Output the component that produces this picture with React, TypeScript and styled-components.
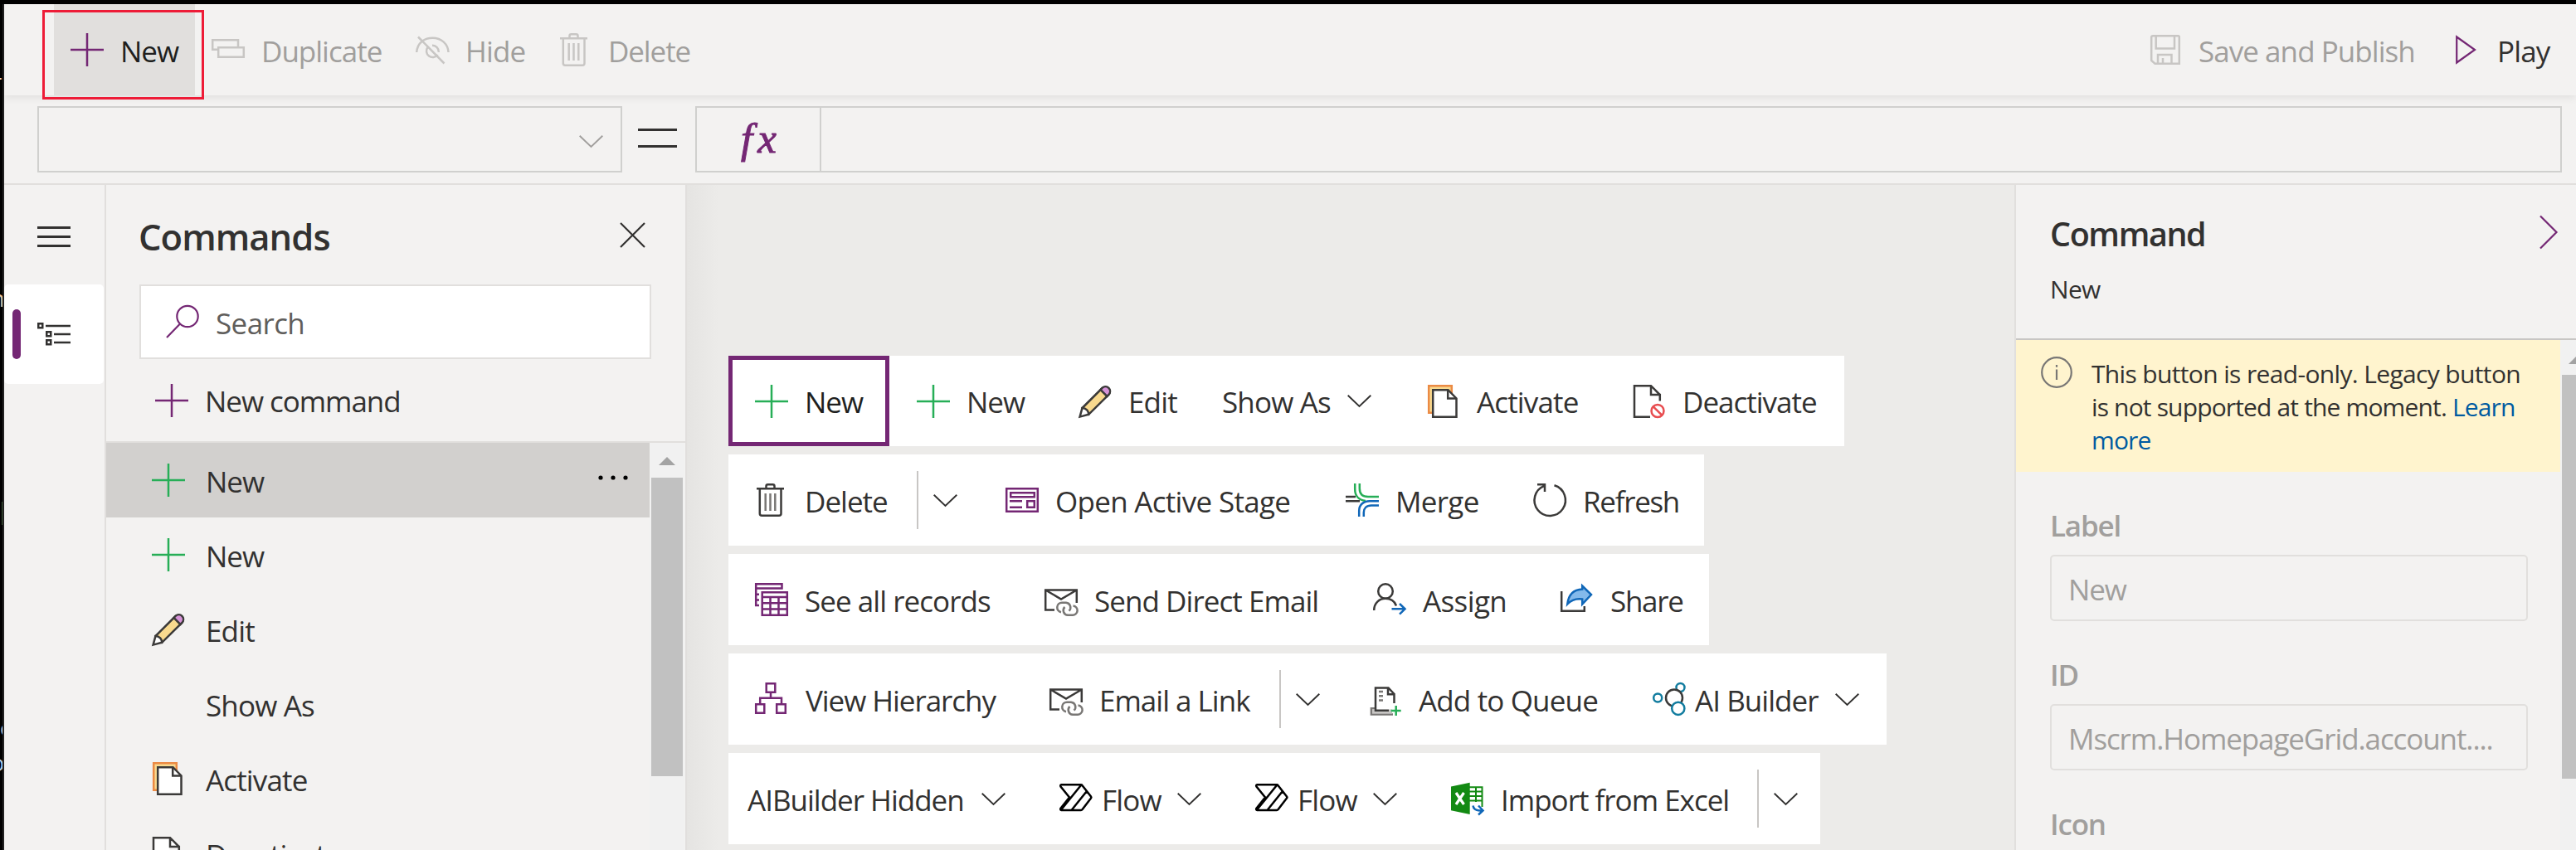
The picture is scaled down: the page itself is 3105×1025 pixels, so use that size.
import React from "react";
import styled, { createGlobalStyle, css } from "styled-components";

const purple = "#742774";
const green = "#27ae57";
const ink = "#323130";
const line = "#3b3a39";
const muted = "#a19f9d";
const mutedIcon = "#c8c6c4";
const blue = "#1067b8";
const surface = "#f3f2f1";
const border = "#e1dfdd";

const GlobalStyle = createGlobalStyle`
  * { box-sizing: border-box; }
  html, body { margin: 0; padding: 0; overflow: hidden; background: #000; }
  body { font-family: "Open Sans", "Noto Sans", sans-serif; font-size: 35px; color: ${ink}; }
`;

/* ---------- shell ---------- */

const Screen = styled.div`
  display: flex;
  width: 3105px;
  height: 1025px;
  padding-top: 5px;
  background: #000;
  overflow: hidden;
`;

const Backdrop = styled.div`
  position: relative;
  flex: none;
  width: 5px;
  overflow: hidden;
  border-right: 2px solid #222;
`;

const Sliver = styled.span<{ $top: number; $left: number; $color: string }>`
  position: absolute;
  top: ${(p) => p.$top}px;
  left: ${(p) => p.$left}px;
  font-size: 27px;
  line-height: 30px;
  color: ${(p) => p.$color};
`;

const AppWindow = styled.div`
  position: relative;
  display: flex;
  flex-direction: column;
  flex: 1;
  min-width: 0;
  background: ${surface};
`;

/* ---------- shared parts ---------- */

const Svg = styled.svg`
  display: block;
  flex: none;
  overflow: visible;
  fill: none;
`;

const Label = styled.span<{ $w?: number; $ls?: number; $gap?: number; $color?: string }>`
  flex: none;
  display: block;
  width: ${(p) => (p.$w ? `${p.$w}px` : "auto")};
  margin-left: ${(p) => p.$gap ?? 19}px;
  padding: 3px 0 0 1px;
  line-height: 48px;
  letter-spacing: ${(p) => p.$ls ?? -0.85}px;
  white-space: nowrap;
  color: ${(p) => p.$color ?? ink};
`;

const Item = styled.div<{ $lead?: number }>`
  flex: none;
  display: flex;
  align-items: center;
  margin-left: ${(p) => p.$lead ?? 65}px;
`;

const ScrollTrack = styled.div`
  flex: none;
  width: 42px;
  padding: 0 2px;
  background: #f1f1f1;
`;

const ScrollArrow = styled.div<{ $top: number; $left: number }>`
  width: 0;
  height: 10px;
  margin: ${(p) => p.$top}px 0 0 ${(p) => p.$left}px;
  border: solid transparent;
  border-width: 0 10px 10px;
  border-bottom-color: #a3a3a3;
`;

const ScrollThumb = styled.div<{ $h: number; $gap: number }>`
  height: ${(p) => p.$h}px;
  margin-top: ${(p) => p.$gap}px;
  background: #c1c1c1;
`;

/* ---------- icons, drawn on a 40px grid ---------- */

const Icon = ({ children, w = 40, color = line }: { children: React.ReactNode; w?: number; color?: string }) => (
  <Svg width={w} height={40} viewBox={`0 0 ${w} 40`} stroke={color} strokeWidth={2.5}>
    {children}
  </Svg>
);

const Plus = ({ color = green }: { color?: string }) => (
  <Icon color={color}>
    <path d="M20 0V40M0 20H40" />
  </Icon>
);

const Chevron = ({ color = ink }: { color?: string }) => (
  <Svg width={29} height={15} viewBox="0 0 29 15" stroke={color} strokeWidth={1.9}>
    <path d="M.7.7 14.5 14 28.3.7" />
  </Svg>
);

const Duplicate = () => (
  <Icon color={mutedIcon}>
    <path d="M32 16V8.2H1.2V19.8H7M8.2 17.2H38.8V28.8H8.2Z" />
  </Icon>
);

const Hide = () => (
  <Icon color={mutedIcon}>
    <path d="M1.2 23C2 12 10 5.8 20.5 5.8S39 13 39.5 23M3 4.5 34.5 36.5" />
    <path d="M14.5 17a7.5 7.5 0 1 0 12 9M20 14.8a7.5 7.5 0 0 1 7.8 8" />
  </Icon>
);

const Trash = ({ color = line, bars = "#797775" }: { color?: string; bars?: string }) => (
  <Icon color={color}>
    <path d="M2 6.3H35M13.5 6V3.2q0-2 2-2h6q2 0 2 2V6M5.8 6.5V36.2q0 2.5 2.5 2.5H29q2.5 0 2.5-2.5V6.5" />
    <path d="M12.7 12V33M18.5 12V33M24.3 12V33" stroke={bars} />
  </Icon>
);

const Save = () => (
  <Icon color={mutedIcon}>
    <path d="M5 3.2H35.5q1.3 0 1.3 1.3V36.8H7.5L3.2 33V5q0-1.800 1.800-1.800ZM8.700 3V18.500H31V3M11 36.500V26H27.500V36.500M17 30V36" />
  </Icon>
);

const Play = () => (
  <Icon w={27} color={purple}>
    <path d="M2.2 4.5V35.5L24 20Z" strokeWidth={2.2} />
  </Icon>
);

const Pencil = () => (
  <Icon>
    <path d="M4.5 28 28.5 4A5.6 5.6 0 0 1 36.4 11.9L12.2 35.8Z" fill="#f8d98e" />
    <path d="M26.5 6 28.8 3.6A5.6 5.6 0 0 1 36.7 11.5L34.4 13.9Z" fill="#d693d8" />
    <path d="M4.5 28C9 28 12.5 31.5 12.2 35.8L1.6 38.6Z" fill="#fff" />
  </Icon>
);

const Activate = () => (
  <Icon>
    <path d="M2.2 1.2H29.8V33.8H2.2Z" fill="#f8d98e" stroke="#eb8a44" />
    <path d="M7.2 6.2H25.5L35.5 16.5V38.8H7.2Z" fill="#fff" />
    <path d="M25.2 6V16.5H35.5" />
  </Icon>
);

const Deactivate = () => (
  <Icon>
    <path d="M21 38.8H2V1.2H22L32.8 12V19.5V12H22V1.2" fill="#fff" />
    <circle cx={30} cy={31.5} r={7.5} stroke="#e84d50" fill="#fff" />
    <path d="M24.8 26.3 35.2 36.7" stroke="#e84d50" />
  </Icon>
);

const Stage = () => (
  <Icon color={purple}>
    <path d="M1.2 6.2H38.8V33.8H1.2ZM6.2 11.2H34.8V16.3H6.2ZM5 21.2H20M5 28.7H20M26.2 21.2H34.8V28.8H26.2Z" />
  </Icon>
);

const Merge = () => (
  <Icon>
    <path d="M0 16H12M0 21.2H17" />
    <path d="M11.2 0V7C11.2 14 15 20 24 21M16.8 0V6C16.8 12 20 16 27 16H40" stroke={green} />
    <path d="M40 21.2H29C21 21.2 16.2 26 16.2 33V40M40 26.5H31C25 26.5 21.8 30 21.8 35V40" stroke={blue} />
  </Icon>
);

const Refresh = () => (
  <Icon>
    <path d="M25.5 2.3A18.7 18.7 0 1 1 13.5 2.8M5 1.3H14V10" />
  </Icon>
);

const Records = () => (
  <Icon color={purple}>
    <path d="M5 13.7H1.2V1.2H32.5V6.5H1.2M5 20.5H1.2M1.2 13V27H5" />
    <path d="M8.7 11.2H38.8V38.8H8.7ZM8.7 17H38.8M8.7 24.2H38.8M8.7 31.5H38.8M18.5 17V38.8M28.5 17V38.8" />
  </Icon>
);

const MailLink = () => (
  <Icon>
    <path d="M12 32.5H1.2V8.5H38.8V24M1.2 8.5 20 19.5 38.8 8.5" />
    <path d="M20 35.2a5.8 5.8 0 0 1 1-11.5h5a5.8 5.8 0 0 1 3.5 10M34.5 27.5A5.6 5.6 0 0 1 33.5 38.7H28a5.6 5.6 0 0 1-3.5-9.7" stroke="#797775" />
  </Icon>
);

const Assign = () => (
  <Icon>
    <circle cx={15} cy={10} r={8.8} />
    <path d="M1.2 33C1.2 24 7.5 18.8 15 18.8 21 18.8 26 22 28 27.5" />
    <path d="M22.5 31.3H38.5M32 25 38.5 31.3 32 37.6" stroke={blue} />
  </Icon>
);

const Share = () => (
  <Icon>
    <path d="M2.2 10V33.8H29.8V28" />
    <path d="M27.2 3.5 38 14 27.2 25.5V19.5C20 18.5 14 20.5 9.3 25.5 10.5 14 17 8 27.2 7.5Z" fill="#83b9eb" stroke={blue} />
  </Icon>
);

const Hierarchy = () => (
  <Icon color={purple}>
    <path d="M13.7 1.2H24.3V11.8H13.7ZM19 12V18.8M6.2 25V18.8H32V25M1.2 26.2H11.3V36.8H1.2ZM26.2 26.2H36.8V36.8H26.2Z" />
  </Icon>
);

const Queue = () => (
  <Icon>
    <path d="M6 31.2H1.9V38.5H28" stroke="#797775" />
    <path d="M3 32.5H27V37.5H3Z" fill="#c8c6c4" stroke="none" />
    <path d="M23 33.8H7V6.5H22.5L29.5 14V25V14.2H22V6.5" fill="#fff" />
    <path d="M11 11H16M11 16.3H16M11 21.5H16" stroke="#797775" />
    <path d="M31.7 28V40M25.7 34H37.7" stroke={green} />
  </Icon>
);

const AiBuilder = () => (
  <Icon color="#117c9f">
    <circle cx={33.5} cy={6} r={5} />
    <circle cx={26} cy={18.5} r={10} stroke={line} fill="#fff" />
    <circle cx={6.2} cy={18.5} r={5} />
    <circle cx={30.8} cy={31.3} r={7.6} fill="#fff" />
  </Icon>
);

const Flow = () => (
  <Icon color="#000">
    <path d="M2.5 3.3H26Q27 3.3 27.6 4.2L38 17.5Q38.8 18.5 38 19.5L27.5 33.2Q27 34 26 34H2.5Q.5 33.5 1.5 31.7L12 18.5 1.5 5.5Q.5 3.8 2.5 3.3ZM26.5 3.3 2 33.5M33 11 14.5 34" />
  </Icon>
);

const Excel = () => (
  <Icon>
    <path d="M22 6.2H37.5V30M22 11.5H37M22 17H37M22 22.5H37M30 6V24" stroke="#138a13" strokeWidth={2} />
    <path d="M0 5.5 22.7.8V39L0 34.3Z" fill="#138a13" stroke="none" />
    <path d="M6 13 15.5 27M15.5 13 6 27" stroke="#fff" strokeWidth={3.2} />
    <path d="M26.5 28.5C27 32.5 29 34.5 38 34.5M33 28.5 38.5 34.5 33 39.5" stroke={blue} />
  </Icon>
);

/* ---------- top command bar ---------- */

const TopBar = styled.header`
  position: relative;
  flex: none;
  display: flex;
  align-items: stretch;
  height: 110px;
  padding-right: 32px;
  box-shadow: 0 2px 10px rgba(0, 0, 0, 0.09);
`;

const NewButton = styled.div`
  display: flex;
  align-items: center;
  width: 170px;
  margin-left: 60px;
  padding-left: 20px;
  background: ${border};
`;

const Highlight = styled.div`
  position: absolute;
  left: 46px;
  top: 7px;
  width: 195px;
  height: 108px;
  border: 3px solid #ee1c37;
`;

const Spacer = styled.div`
  flex: 1;
`;

const FormulaBar = styled.div`
  flex: none;
  display: flex;
  align-items: flex-start;
  height: 108px;
  padding: 13px 17px 0 40px;
  border-bottom: 2px solid ${border};
`;

const PropertySelect = styled.div`
  display: flex;
  align-items: center;
  justify-content: flex-end;
  width: 705px;
  height: 80px;
  padding: 4px 21px 0 0;
  border: 2px solid #d0d0ce;
`;

const Equals = styled.div`
  width: 47px;
  height: 23px;
  margin: 27px 22px 0 19px;
  border: solid ${ink};
  border-width: 3px 0;
`;

const Formula = styled.div`
  flex: 1;
  display: flex;
  height: 80px;
  border: 2px solid #d0d0ce;
`;

const FxCell = styled.div`
  width: 150px;
  padding-left: 53px;
  border-right: 2px solid #d0d0ce;
  font: italic 51px/74px "Liberation Serif", serif;
  letter-spacing: 6px;
  color: ${purple};
  -webkit-text-stroke: 1px ${purple};
`;

/* ---------- body ---------- */

const Body = styled.div`
  flex: 1;
  display: flex;
  min-height: 0;
`;

const Rail = styled.nav`
  flex: none;
  width: 123px;
  border-right: 2px solid ${border};
`;

const RailButton = styled.div<{ $active?: boolean }>`
  display: flex;
  align-items: center;
  height: 120px;
  width: 120px;
  padding: 5px 0 0 40px;
  ${(p) =>
    p.$active &&
    css`
      padding: 0 0 0 10px;
      gap: 20px;
      background: #fff;
      border-radius: 5px;
    `}
`;

const ActiveMark = styled.div`
  width: 10px;
  height: 60px;
  border-radius: 5px;
  background: ${purple};
`;

const Panel = styled.aside`
  flex: none;
  display: flex;
  flex-direction: column;
  width: 700px;
  border-right: 2px solid ${border};
`;

const PanelHeader = styled.div`
  display: flex;
  align-items: center;
  justify-content: space-between;
  height: 120px;
  padding: 0 48px 0 39px;
`;

const PanelTitle = styled.h2`
  margin: 5px 0 0;
  font-size: 43.5px;
  line-height: 56px;
  font-weight: 600;
  letter-spacing: -0.95px;
`;

const SearchBox = styled.div`
  display: flex;
  align-items: center;
  width: 617px;
  height: 90px;
  margin-left: 40px;
  padding-left: 30px;
  background: #fff;
  border: 2px solid ${border};
`;

const NewCommand = styled.div`
  display: flex;
  align-items: center;
  height: 101px;
  padding-left: 59px;
  border-bottom: 2px solid ${border};
`;

const CommandScroller = styled.div`
  flex: 1;
  display: flex;
  min-height: 0;
  padding-right: 1px;
`;

const CommandList = styled.div`
  flex: 1;
  min-width: 0;
  overflow: hidden;
`;

const CommandRow = styled.div<{ $selected?: boolean }>`
  display: flex;
  align-items: center;
  height: 90px;
  padding: 0 26px 0 55px;
  background: ${(p) => (p.$selected ? "#d2d0ce" : "transparent")};
`;

const IconSlot = styled.div`
  width: 40px;
`;

/* ---------- canvas ---------- */

const Canvas = styled.main`
  flex: 1;
  min-width: 0;
  display: flex;
  flex-direction: column;
  align-items: flex-start;
  gap: 10px;
  padding: 206px 0 0 50px;
  overflow: hidden;
  background: linear-gradient(90deg, #e5e4e2 0, #ecebe9 38px);
`;

const Ribbon = styled.div<{ $w: number; $h?: number }>`
  flex: none;
  display: flex;
  align-items: center;
  width: ${(p) => p.$w}px;
  height: ${(p) => p.$h ?? 110}px;
  background: #fff;
`;

const SelectedCommand = styled.div`
  display: flex;
  align-items: center;
  align-self: stretch;
  width: 194px;
  padding-left: 27px;
  border: 5px solid ${purple};
`;

const Split = styled.div<{ $before?: number }>`
  display: flex;
  align-items: center;
  height: 70px;
  margin-left: ${(p) => p.$before ?? 35}px;
  padding-left: 18px;
  border-left: 2px solid ${mutedIcon};
`;

const Drop = styled.div`
  margin-left: 20px;
`;

/* ---------- properties ---------- */

const Properties = styled.aside`
  flex: none;
  display: flex;
  flex-direction: column;
  width: 677px;
  border-left: 2px solid ${border};
`;

const PropertiesHeader = styled.div`
  height: 187px;
  padding: 35px 22px 0 41px;
  border-bottom: 2px solid ${mutedIcon};
`;

const TitleLine = styled.div`
  display: flex;
  justify-content: space-between;
  height: 70px;
`;

const PropertiesTitle = styled.h3`
  margin: -3px 0 0;
  font-size: 39.5px;
  line-height: 54px;
  font-weight: 600;
  letter-spacing: -1.4px;
`;

const Subtitle = styled.div`
  font-size: 30px;
  line-height: 41px;
  letter-spacing: -0.7px;
`;

const PropertiesBody = styled.div`
  flex: 1;
  display: flex;
  min-height: 0;
  overflow: hidden;
`;

const Form = styled.div`
  flex: none;
  width: 656px;
  overflow: hidden;
`;

const Notice = styled.div`
  display: flex;
  height: 159px;
  padding: 20px 0 0 30px;
  gap: 23px;
  background: #fff4ce;
  font-size: 30px;
  line-height: 40px;
`;

const NoticeText = styled.p`
  margin: 1px 0 0;
  white-space: nowrap;
`;

const NoticeLine = styled.span<{ $ls: number }>`
  display: block;
  letter-spacing: ${(p) => p.$ls}px;
`;

const Link = styled.a`
  color: #005ba1;
`;

const Field = styled.div`
  padding: 40px 0 0 41px;
`;

const FieldName = styled.div`
  height: 46px;
  line-height: 50px;
  font-size: 35px;
  font-weight: 600;
  letter-spacing: -1.2px;
  color: ${muted};
`;

const FieldBox = styled.div`
  width: 576px;
  height: 80px;
  margin-top: 14px;
  padding: 2px 20px 0 20px;
  border: 2px solid ${border};
  border-radius: 5px;
  line-height: 76px;
  white-space: nowrap;
  letter-spacing: -1.1px;
  color: ${muted};
`;

const sidebarCommands: { icon?: React.ReactNode; name: string; selected?: boolean; ls?: number }[] = [
  { icon: <Plus />, name: "New", selected: true, ls: -1 },
  { icon: <Plus />, name: "New", ls: -1 },
  { icon: <Pencil />, name: "Edit" },
  { name: "Show As" },
  { icon: <Activate />, name: "Activate" },
  { icon: <Deactivate />, name: "Deactivate" },
];

export default function App() {
  return (
    <>
      <GlobalStyle />
      <Screen>
        <Backdrop>
          <Sliver $top={72} $left={-6} $color="#f3d9c8">-</Sliver>
          <Sliver $top={340} $left={-11} $color="#e8c9a8">n</Sliver>
          <Sliver $top={596} $left={-4} $color="#d98b3a">|</Sliver>
          <Sliver $top={858} $left={0} $color="#e0dcd8">o</Sliver>
          <Sliver $top={900} $left={-11} $color="#b9d4f0">o</Sliver>
        </Backdrop>
        <AppWindow>
          <TopBar>
            <NewButton>
              <Plus color={purple} />
              <Label $ls={-1} $color="#201f1e">New</Label>
            </NewButton>
            <Item $lead={20}>
              <Duplicate />
              <Label $w={147} $ls={-1} $color={muted}>Duplicate</Label>
            </Item>
            <Item $lead={40}>
              <Hide />
              <Label $w={73} $color={muted}>Hide</Label>
            </Item>
            <Item $lead={40}>
              <Trash color={mutedIcon} bars={mutedIcon} />
              <Label $w={100} $ls={-1.1} $color={muted}>Delete</Label>
            </Item>
            <Spacer />
            <Item $lead={0}>
              <Save />
              <Label $w={261} $ls={-0.95} $color={muted}>Save and Publish</Label>
            </Item>
            <Item $lead={49}>
              <Play />
              <Label $w={64} $gap={23}>Play</Label>
            </Item>
            <Highlight />
          </TopBar>

          <FormulaBar>
            <PropertySelect>
              <Chevron color={muted} />
            </PropertySelect>
            <Equals />
            <Formula>
              <FxCell>fx</FxCell>
            </Formula>
          </FormulaBar>

          <Body>
            <Rail>
              <RailButton>
                <Svg width={40} height={25} viewBox="0 0 40 25" stroke={ink} strokeWidth={3}>
                  <path d="M0 1.5H40M0 12.5H40M0 23.5H40" />
                </Svg>
              </RailButton>
              <RailButton $active>
                <ActiveMark />
                <Svg width={40} height={28} viewBox="0 0 40 28" stroke={ink} strokeWidth={2.5}>
                  <path d="M1.25 1.25H6.25V6.25H1.25ZM11.25 11.25H16.25V16.25H11.25ZM11.25 21.25H16.25V26.25H11.25ZM10 4H40M20 14H40M20 24H40" />
                </Svg>
              </RailButton>
            </Rail>

            <Panel>
              <PanelHeader>
                <PanelTitle>Commands</PanelTitle>
                <Svg width={31} height={31} viewBox="0 0 31 31" stroke={ink} strokeWidth={2.2}>
                  <path d="M1 1 30 30M30 1 1 30" />
                </Svg>
              </PanelHeader>
              <SearchBox>
                <Icon color={purple}>
                  <circle cx={26} cy={13.5} r={12.7} strokeWidth={2.2} />
                  <path d="M17 22.5 1 39" strokeWidth={2.2} />
                </Icon>
                <Label $ls={-0.6} $color="#605e5c">Search</Label>
              </SearchBox>
              <NewCommand>
                <Plus color={purple} />
                <Label $ls={-1.05}>New command</Label>
              </NewCommand>
              <CommandScroller>
                <CommandList>
                  {sidebarCommands.map((c, i) => (
                    <CommandRow key={i} $selected={c.selected}>
                      <IconSlot>{c.icon}</IconSlot>
                      <Label $gap={24} $ls={c.ls}>{c.name}</Label>
                      {c.selected && (
                        <>
                          <Spacer />
                          <Svg width={36} height={10} viewBox="0 0 36 10">
                            <g fill="#000">
                              <circle cx={3} cy={2} r={2.6} />
                              <circle cx={18} cy={2} r={2.6} />
                              <circle cx={33} cy={2} r={2.6} />
                            </g>
                          </Svg>
                        </>
                      )}
                    </CommandRow>
                  ))}
                </CommandList>
                <ScrollTrack>
                  <ScrollArrow $top={17} $left={9} />
                  <ScrollThumb $gap={15} $h={360} />
                </ScrollTrack>
              </CommandScroller>
            </Panel>

            <Canvas>
              <Ribbon $w={1345} $h={109}>
                <SelectedCommand>
                  <Plus />
                  <Label $ls={-1} $color="#201f1e">New</Label>
                </SelectedCommand>
                <Item $lead={33}>
                  <Plus />
                  <Label $w={71} $ls={-1}>New</Label>
                </Item>
                <Item>
                  <Pencil />
                  <Label $w={60}>Edit</Label>
                </Item>
                <Item $lead={53}>
                  <Label $w={132} $gap={0}>Show As</Label>
                  <Drop><Chevron /></Drop>
                </Item>
                <Item $lead={67}>
                  <Activate />
                  <Label $w={124}>Activate</Label>
                </Item>
                <Item>
                  <Deactivate />
                  <Label $w={163} $ls={-1}>Deactivate</Label>
                </Item>
              </Ribbon>

              <Ribbon $w={1176}>
                <Item $lead={32}>
                  <Trash />
                  <Label $w={101} $ls={-1}>Delete</Label>
                  <Split><Chevron /></Split>
                </Item>
                <Item $lead={58}>
                  <Stage />
                  <Label $w={286} $ls={-0.7}>Open Active Stage</Label>
                </Item>
                <Item>
                  <Merge />
                  <Label $w={102} $ls={-0.7}>Merge</Label>
                </Item>
                <Item>
                  <Refresh />
                  <Label $ls={-1.3}>Refresh</Label>
                </Item>
              </Ribbon>

              <Ribbon $w={1182}>
                <Item $lead={32}>
                  <Records />
                  <Label $w={224} $ls={-0.95}>See all records</Label>
                </Item>
                <Item $lead={66}>
                  <MailLink />
                  <Label $w={271} $ls={-0.95}>Send Direct Email</Label>
                </Item>
                <Item $lead={66}>
                  <Assign />
                  <Label $w={101} $ls={-0.6}>Assign</Label>
                </Item>
                <Item>
                  <Share />
                  <Label $gap={20} $ls={-1.3}>Share</Label>
                </Item>
              </Ribbon>

              <Ribbon $w={1396}>
                <Item $lead={32}>
                  <Hierarchy />
                  <Label $gap={20} $w={230} $ls={-1.05}>View Hierarchy</Label>
                </Item>
                <Item>
                  <MailLink />
                  <Label $w={183} $ls={-1}>Email a Link</Label>
                  <Split><Chevron /></Split>
                </Item>
                <Item $lead={60}>
                  <Queue />
                  <Label $gap={18} $w={218}>Add to Queue</Label>
                </Item>
                <Item>
                  <AiBuilder />
                  <Label $gap={10} $w={150} $ls={-0.95}>AI Builder</Label>
                  <Drop><Chevron /></Drop>
                </Item>
              </Ribbon>

              <Ribbon $w={1316}>
                <Item $lead={22}>
                  <Label $gap={0} $w={263} $ls={-1}>AIBuilder Hidden</Label>
                  <Drop><Chevron /></Drop>
                </Item>
                <Item>
                  <Flow />
                  <Label $gap={10} $w={72}>Flow</Label>
                  <Drop><Chevron /></Drop>
                </Item>
                <Item>
                  <Flow />
                  <Label $gap={10} $w={72}>Flow</Label>
                  <Drop><Chevron /></Drop>
                </Item>
                <Item>
                  <Excel />
                  <Label $w={274} $ls={-1}>Import from Excel</Label>
                  <Split $before={36}><Chevron /></Split>
                </Item>
              </Ribbon>
            </Canvas>

            <Properties>
              <PropertiesHeader>
                <TitleLine>
                  <PropertiesTitle>Command</PropertiesTitle>
                  <Svg width={22} height={42} viewBox="0 0 22 42" stroke={purple} strokeWidth={2.2}>
                    <path d="M1 2.5 20.5 22 1 41.5" />
                  </Svg>
                </TitleLine>
                <Subtitle>New</Subtitle>
              </PropertiesHeader>
              <PropertiesBody>
                <Form>
                  <Notice>
                    <Svg width={38} height={38} viewBox="0 0 38 38" stroke="#797775" strokeWidth={2.2}>
                      <circle cx={19} cy={19} r={17.8} />
                      <path d="M19 15.5V28M19 10V12.7" />
                    </Svg>
                    <NoticeText>
                      <NoticeLine $ls={-0.65}>This button is read-only. Legacy button</NoticeLine>
                      <NoticeLine $ls={-0.85}>is not supported at the moment. <Link>Learn</Link></NoticeLine>
                      <NoticeLine $ls={-0.85}><Link>more</Link></NoticeLine>
                    </NoticeText>
                  </Notice>
                  <Field>
                    <FieldName>Label</FieldName>
                    <FieldBox>New</FieldBox>
                  </Field>
                  <Field>
                    <FieldName>ID</FieldName>
                    <FieldBox>Mscrm.HomepageGrid.account....</FieldBox>
                  </Field>
                  <Field>
                    <FieldName>Icon</FieldName>
                  </Field>
                </Form>
                <ScrollTrack>
                  <ScrollArrow $top={19} $left={8} />
                  <ScrollThumb $gap={13} $h={487} />
                </ScrollTrack>
              </PropertiesBody>
            </Properties>
          </Body>
        </AppWindow>
      </Screen>
    </>
  );
}
